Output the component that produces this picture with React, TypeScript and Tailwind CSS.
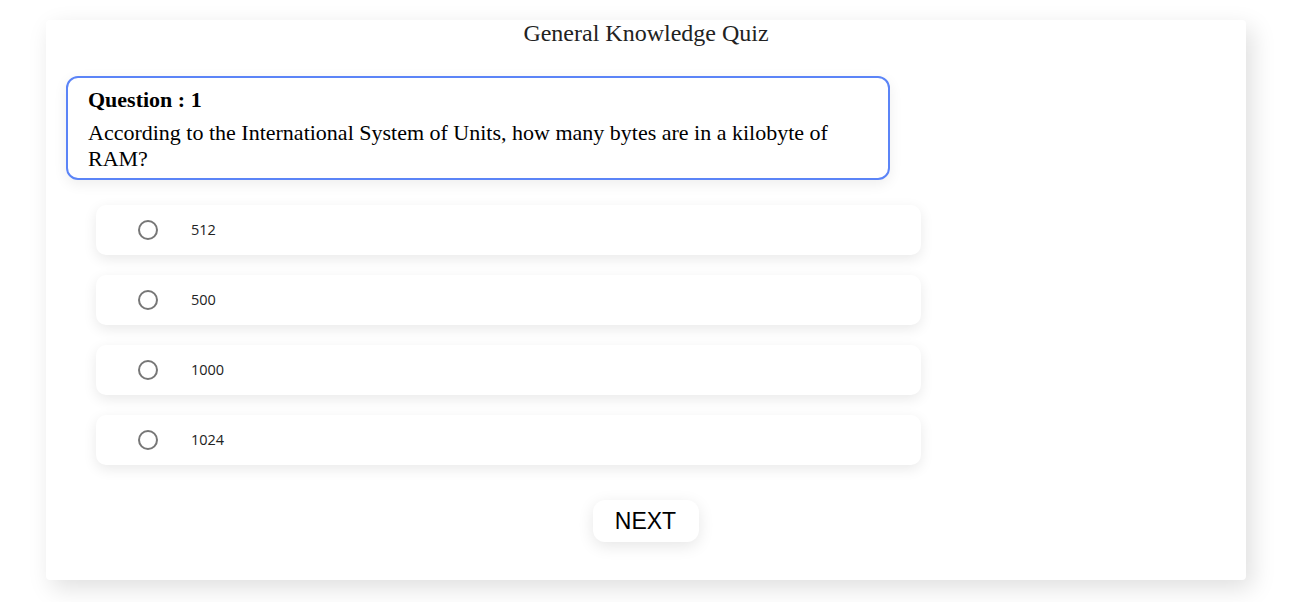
import React, { useState } from "react";

const options = ["512", "500", "1000", "1024"];

export default function App() {
  const [picked, setPicked] = useState<number | null>(null);

  return (
    <div className="w-full min-h-[602px] bg-white pt-5">
      <div className="w-[1200px] h-[560px] ml-[46px] bg-white rounded-[4px] shadow-[6px_8px_24px_rgba(0,0,0,0.13)] px-5 flex flex-col">
        <h1 className="text-center text-[24px] leading-[27px] text-[#222] font-['Liberation_Serif',serif]">
          General Knowledge Quiz
        </h1>

        <div className="mt-[29px] w-[824px] border-2 border-[#5b84f7] rounded-[12px] shadow-[0_4px_14px_rgba(0,0,0,0.07)] px-5 pt-[9px] pb-[6px] font-['Liberation_Serif',serif] text-black">
          <p className="text-[22px] leading-[26px] font-bold">Question : 1</p>
          <p className="text-[22px] leading-[26px] mt-[7px]">
            According to the International System of Units, how many bytes are in a kilobyte of RAM?
          </p>
        </div>

        <div className="mt-[25px] ml-[30px] flex flex-col gap-5">
          {options.map((opt, i) => (
            <label
              key={opt}
              className="w-[825px] h-[50px] bg-white rounded-[10px] shadow-[0_4px_14px_rgba(0,0,0,0.09)] flex items-center cursor-pointer"
            >
              <span className="ml-[42px] w-5 h-5 rounded-full border-2 border-[#777] flex items-center justify-center">
                {picked === i && <span className="w-2.5 h-2.5 rounded-full bg-[#5b84f7]" />}
              </span>
              <input
                type="radio"
                name="answer"
                className="hidden"
                checked={picked === i}
                onChange={() => setPicked(i)}
              />
              <span className="ml-[33px] text-[14.5px] text-[#222] font-['Open_Sans',sans-serif]">{opt}</span>
            </label>
          ))}
        </div>

        <div className="mt-[35px] flex justify-center">
          <button className="w-[106px] h-[42px] -ml-px rounded-[12px] bg-white shadow-[0_4px_16px_rgba(0,0,0,0.1)] text-[23px] text-black font-['Liberation_Sans',sans-serif]">
            NEXT
          </button>
        </div>
      </div>
    </div>
  );
}
